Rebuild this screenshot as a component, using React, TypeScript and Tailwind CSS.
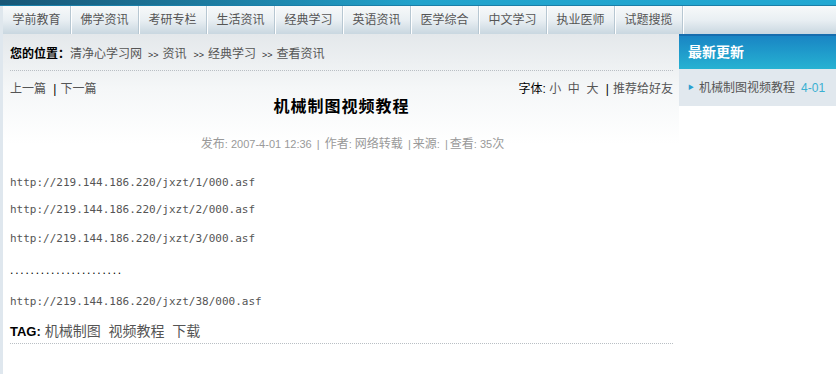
import React from "react";

const navItems = ["学前教育", "佛学资讯", "考研专栏", "生活资讯", "经典学习", "英语资讯", "医学综合", "中文学习", "执业医师", "试题搜揽"];

export default function App() {
  return (
    <div
      className="w-[836px] h-[374px] bg-white overflow-hidden text-[12px] text-[#555]"
      style={{ fontFamily: '"Liberation Sans", "Noto Sans CJK SC", sans-serif' }}
    >
      {/* top bar */}
      <div className="h-[6px] bg-gradient-to-r from-[#175676] via-[#22a3cc] to-[#22a8d2] border-b border-[#1a7fa8]" />
      {/* nav */}
      <div className="h-[28px] flex bg-gradient-to-b from-[#f7f9fa] via-[#e9eff3] to-[#c9d7e0] border-l-[3px] border-[#dfe7ed]">
        {navItems.map((n) => (
          <div
            key={n}
            className="w-[68px] h-full flex items-center justify-center text-[#555] border-r border-[#b7c7d2] shadow-[1px_0_0_#ffffff]"
          >
            {n}
          </div>
        ))}
      </div>
      <div className="flex">
        {/* main */}
        <div className="w-[679px] h-[340px] border-l-[3px] border-[#dfe7ee] bg-gradient-to-b from-[#e4e8eb] via-[#f5f7f8] via-50% to-white bg-no-repeat bg-[length:100%_110px] bg-white">
          <div className="pl-[7px] pr-[6px]">
            <div className="pt-[12px] pb-[7px] leading-[16px] border-b border-dotted border-[#b9bfc4]">
              <span className="text-black font-bold">您的位置：</span>
              <span>清净心学习网</span>
              <span className="text-[9px] text-[#333] ml-[6px] mr-[4px]">&gt;&gt;</span>
              <span>资讯</span>
              <span className="text-[9px] text-[#333] ml-[7px] mr-[4px]">&gt;&gt;</span>
              <span>经典学习</span>
              <span className="text-[9px] text-[#333] ml-[6px] mr-[4px]">&gt;&gt;</span>
              <span>查看资讯</span>
            </div>
            <div className="pt-[10px] leading-[16px] flex justify-between">
              <div>
                上一篇 <span className="text-black mx-[4px]">|</span>下一篇
              </div>
              <div>
                <span className="text-black">字体:</span> 小&nbsp; 中&nbsp; 大 <span className="text-black mx-[4px]">|</span>推荐给好友
              </div>
            </div>
            <h1 className="text-center text-[16px] tracking-[1px] font-bold text-black leading-[18px] mt-[1px]">机械制图视频教程</h1>
            <div className="text-center text-[#999] leading-[16px] mt-[20px] pl-[22px] text-[11px]">
              <span className="text-[12px]">发布</span>: 2007-4-01 12:36 <span className="mx-[2px]">|</span> <span className="text-[12px]">作者</span>: <span className="text-[12px]">网络转载</span> <span className="mx-[2px]">|</span><span className="text-[12px]">来源</span>: <span className="mx-[2px]">|</span><span className="text-[12px]">查看</span>: 35<span className="text-[12px]">次</span>
            </div>
            <div className="text-[#555] text-[11px] leading-[16px]" style={{ fontFamily: '"DejaVu Sans Mono", monospace' }}>
              <p className="mt-[23px]">http://219.144.186.220/jxzt/1/000.asf</p>
              <p className="mt-[11px]">http://219.144.186.220/jxzt/2/000.asf</p>
              <p className="mt-[13px]">http://219.144.186.220/jxzt/3/000.asf</p>
              <p
                className="mt-[15px] text-black text-[12px] tracking-[1.8px]"
                style={{ fontFamily: '"Liberation Sans", sans-serif' }}
              >
                ......................
              </p>
              <p className="mt-[16px]">http://219.144.186.220/jxzt/38/000.asf</p>
            </div>
            <div className="mt-[12px] pb-[2px] leading-[18px] border-b border-dotted border-[#b9bfc4] text-[14px]">
              <span className="text-black font-bold text-[13px]">TAG:</span> 机械制图&nbsp; 视频教程&nbsp; 下载
            </div>
          </div>
        </div>
        {/* sidebar */}
        <div className="w-[157px]">
          <div className="h-[35px] border-t-[2px] border-[#176dae] bg-gradient-to-b from-[#1a85c4] to-[#27b2d2] flex items-center pl-[9px] text-white font-bold text-[14px]">
            最新更新
          </div>
          <div className="h-[37px] bg-[#e1e8ee] flex items-center pl-[9px]">
            <span className="text-[#2a9fd0] text-[6px] mr-[5px]">▶</span>
            <span className="text-[#555]">机械制图视频教程</span>
            <span className="text-[#3ab0d2] ml-[6px]">4-01</span>
          </div>
        </div>
      </div>
    </div>
  );
}
